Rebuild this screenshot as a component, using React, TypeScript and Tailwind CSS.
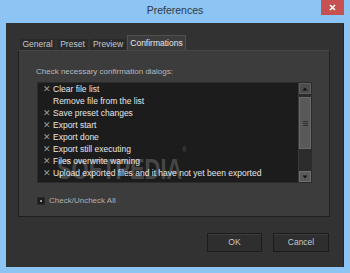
import React from 'react';

const items = [
  { label: 'Clear file list', checked: true },
  { label: 'Remove file from the list', checked: false },
  { label: 'Save preset changes', checked: true },
  { label: 'Export start', checked: true },
  { label: 'Export done', checked: true },
  { label: 'Export still executing', checked: true },
  { label: 'Files overwrite warning', checked: true },
  { label: 'Upload exported files and it have not yet been exported', checked: true },
];

const tabs = ['General', 'Preset', 'Preview', 'Confirmations'];

export default function App() {
  return (
    <div
      className="w-[350px] h-[273px] bg-[#8cc4f4] flex flex-col overflow-hidden relative"
      style={{ fontFamily: '"Liberation Sans", Arial, sans-serif' }}
    >
      {/* Title bar */}
      <div className="h-[23px] relative flex items-center justify-center shrink-0">
        <span className="text-[10.5px] text-[#2f3a44] -mt-[1px]">Preferences</span>
        <div className="absolute right-[6px] top-0 w-[23px] h-[15px] bg-[#c75050] flex items-center justify-center">
          <svg width="7" height="7" viewBox="0 0 7 7">
            <path d="M1 1L6 6M6 1L1 6" stroke="#fff" strokeWidth="1.6" />
          </svg>
        </div>
      </div>

      {/* Window body */}
      <div className="mx-[6px] mb-[6px] flex-1 bg-[#323232] border-r border-[#262626] flex flex-col pl-[12px] pr-[13px] pt-[12px]">
        {/* Tabs */}
        <div className="flex items-end h-[15px] pl-[2px] gap-[2px]">
          {tabs.map((t, i) =>
            i === 3 ? (
              <div
                key={t}
                className="h-[15px] w-[59px] bg-[#3c3c3c] border border-b-0 border-[#505050] flex items-center justify-center text-[8.5px] text-[#e8e8e8] -ml-[1px]"
              >
                {t}
              </div>
            ) : (
              <div
                key={t}
                className={`h-[11px] bg-[#2a2a2a] flex items-center justify-center text-[8.5px] text-[#c4c8cc] ${
                  i === 0 ? 'w-[35px]' : i === 1 ? 'w-[31px]' : 'w-[36px]'
                }`}
              >
                {t}
              </div>
            )
          )}
        </div>

        {/* Tab panel */}
        <div className="h-[167px] bg-[#3c3c3c] border border-[#1f1f1f] border-t-[#464646] flex flex-col pl-[17px] pr-[17px] pt-[15px]">
          <div className="text-[8px] text-[#b9b9b9] leading-[11px]">Check necessary confirmation dialogs:</div>
          <div className="mt-[5px] ml-[1px] h-[101px] w-[275px] bg-[#1c1c1c] border border-[#2b2b2b] flex">
            <div className="flex-1 flex flex-col overflow-hidden">
              {items.map((it) => (
                <div key={it.label} className="h-[12px] flex items-center shrink-0">
                  <span className="w-[14px] text-center text-[9px] text-[#9c9c9c] leading-none pl-[3px]">
                    {it.checked ? '✕' : ''}
                  </span>
                  <span className="ml-[1px] text-[8.5px] text-[#e6e6e6] whitespace-nowrap leading-none">{it.label}</span>
                </div>
              ))}
            </div>
            {/* Scrollbar */}
            <div className="w-[13px] bg-[#2c2c2c] flex flex-col border-l border-[#3a3a3a]">
              <div className="h-[11px] bg-[#4c4c4c] border border-[#5e5e5e] flex items-center justify-center">
                <svg width="6" height="4" viewBox="0 0 6 4">
                  <path d="M3 0.5L5.5 3.5H0.5Z" fill="#111" />
                </svg>
              </div>
              <div className="mt-[3px] h-[52px] bg-[#595959] border border-[#6a6a6a] flex flex-col items-center justify-center gap-[1px]">
                <div className="w-[5px] h-[1px] bg-[#2e2e2e]" />
                <div className="w-[5px] h-[1px] bg-[#2e2e2e]" />
                <div className="w-[5px] h-[1px] bg-[#2e2e2e]" />
              </div>
              <div className="flex-1" />
              <div className="h-[11px] bg-[#5a5a5a] border border-[#6e6e6e] flex items-center justify-center">
                <svg width="6" height="4" viewBox="0 0 6 4">
                  <path d="M0.5 0.5H5.5L3 3.5Z" fill="#111" />
                </svg>
              </div>
            </div>
          </div>

          <div className="mt-[14px] ml-[1px] flex items-center gap-[4px]">
            <div className="w-[8px] h-[8px] bg-[#1c1c1c] border border-[#2a2a2a] flex items-center justify-center">
              <div className="w-[2px] h-[2px] bg-[#9a9a9a]" />
            </div>
            <span className="text-[8px] text-[#b0b0b0] leading-none">Check/Uncheck All</span>
          </div>
        </div>

        {/* Buttons */}
        <div className="flex justify-end gap-[11px] mt-[16px] pr-[1px]">
          <div className="w-[55px] h-[19px] bg-[#2e2e2e] border border-[#1c1c1c] shadow-[inset_0_1px_0_#3c3c3c] flex items-center justify-center text-[8.5px] text-[#c8c8c8]">
            OK
          </div>
          <div className="w-[56px] h-[19px] bg-[#2e2e2e] border border-[#1c1c1c] shadow-[inset_0_1px_0_#3c3c3c] flex items-center justify-center text-[8.5px] text-[#c8c8c8]">
            Cancel
          </div>
        </div>
      </div>

      {/* Watermark */}
      <div className="absolute left-[57px] top-[154px] text-[30px] font-bold text-white/20 pointer-events-none leading-none scale-x-[0.73] origin-left whitespace-nowrap">
        SOFTPEDIA<sup className="text-[8px] align-top">®</sup>
      </div>
    </div>
  );
}
